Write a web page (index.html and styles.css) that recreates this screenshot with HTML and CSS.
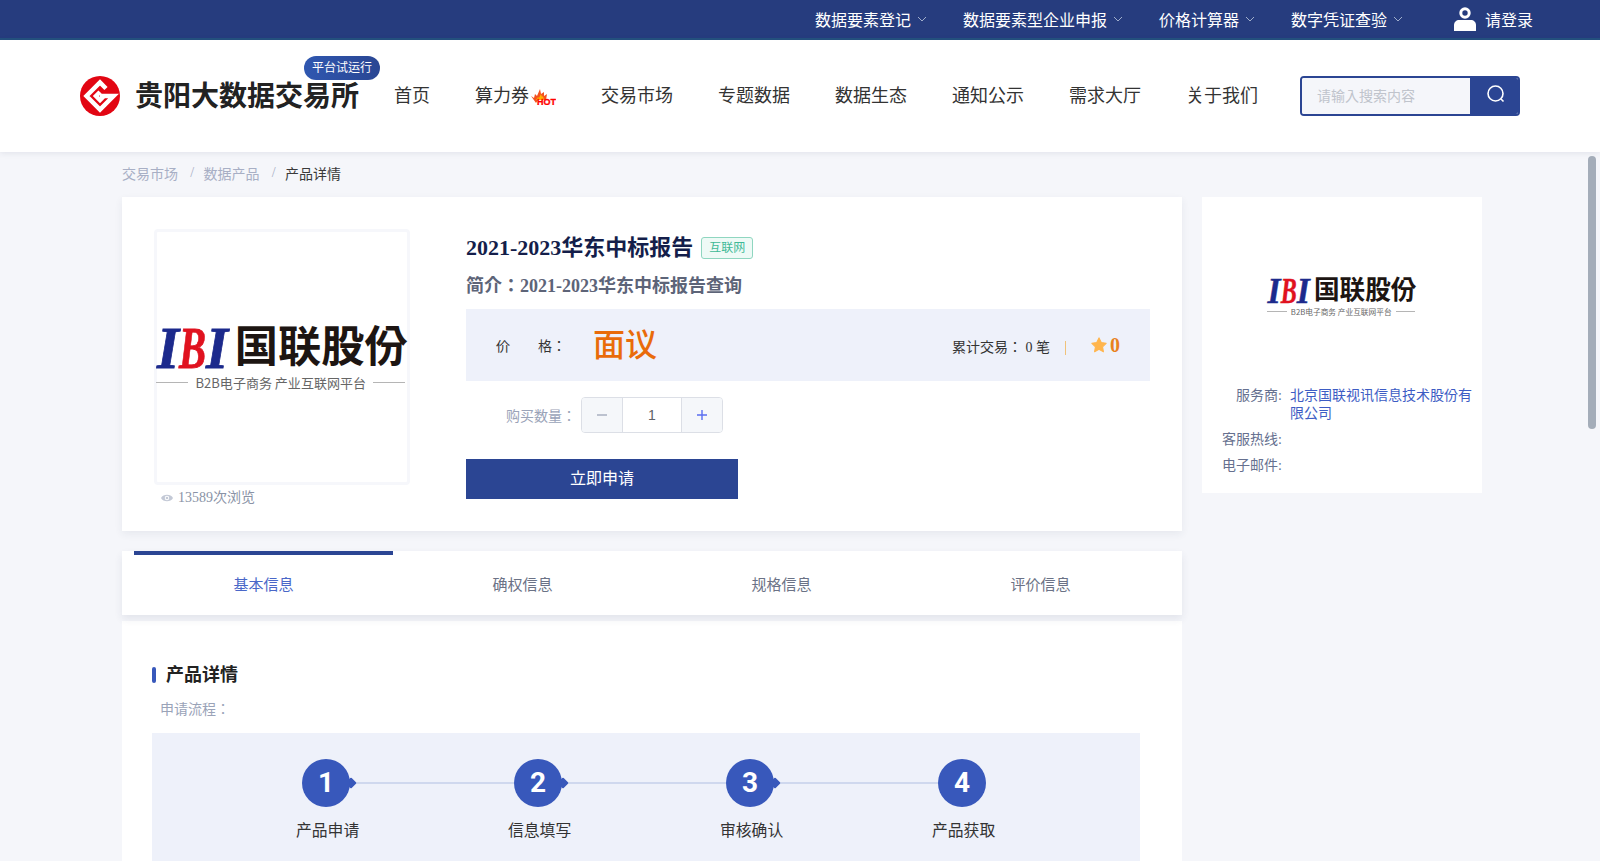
FILE: index.html
```html
<!DOCTYPE html>
<html lang="en">
<head>
    <meta charset="UTF-8">
    <title>贵阳大数据交易所 - 产品详情</title>
    <link rel="stylesheet" href="styles.css">
</head>
<body>
    <div class="top-bar">
        <a class="top-link">数据要素登记<svg class="chevron" viewBox="0 0 10 6"><path d="M1 1l4 4 4-4"/></svg></a>
        <a class="top-link">数据要素型企业申报<svg class="chevron" viewBox="0 0 10 6"><path d="M1 1l4 4 4-4"/></svg></a>
        <a class="top-link">价格计算器<svg class="chevron" viewBox="0 0 10 6"><path d="M1 1l4 4 4-4"/></svg></a>
        <a class="top-link">数字凭证查验<svg class="chevron" viewBox="0 0 10 6"><path d="M1 1l4 4 4-4"/></svg></a>
        <a class="top-login">
            <svg class="user-icon" viewBox="0 0 22 24">
                <circle cx="11" cy="6" r="4.2" fill="none" stroke="#fff" stroke-width="3"/>
                <path d="M0 24v-6c0-3 2.500-5 5-5h12c2.500 0 5 2 5 5v6z" fill="#fff"/>
            </svg>
            请登录
        </a>
    </div>

    <header class="main-header">
        <svg class="site-logo" viewBox="0 0 40 40">
            <circle cx="20" cy="20" r="20" fill="#e20613"/>
            <path d="M26 12.500L20 6.500 6.500 20 20 33.500 33.500 20 20 20l4 0-4 4-4-4 4-4" fill="none" stroke="#fff" stroke-width="4.500"/>
        </svg>
        <div class="site-title">贵阳大数据交易所<span class="trial-badge">平台试运行</span></div>
        <nav class="main-nav">
            <a>首页</a>
            <a class="nav-hot">算力券
                <svg class="hot-icon" viewBox="0 0 26 16">
                    <path d="M1 7l3 2 1-4 2 2 3-7 1 5 3-2 0 4 3-2-1 6H8l-2 3z" fill="#f4511e"/>
                    <path d="M6 11l2-3 1 1 2-4 1 3 1-1 1 4z" fill="#ffb300"/>
                    <text class="hot-text" x="7" y="15.500" textLength="19" lengthAdjust="spacingAndGlyphs">HOT</text>
                </svg>
            </a>
            <a>交易市场</a>
            <a>专题数据</a>
            <a>数据生态</a>
            <a>通知公示</a>
            <a>需求大厅</a>
            <a>关于我们</a>
        </nav>
        <div class="search-box">
            <div class="search-input">请输入搜索内容</div>
            <div class="search-btn">
                <svg class="search-icon" viewBox="0 0 20 20"><circle cx="9.500" cy="9.500" r="7.500"/><path d="M15 15l2.500 2.500"/></svg>
            </div>
        </div>
    </header>

    <div class="breadcrumb">
        <span>交易市场</span><i>/</i><span>数据产品</span><i>/</i><b>产品详情</b>
    </div>

    <div class="page">
        <main class="main-col">
            <section class="card product">
                <div class="product-left">
                    <div class="product-img">
                        <div class="ibi-logo">
                            <div class="ibi-top">
                                <svg class="ibi-mark" viewBox="0 0 73 41">
                                    <text class="ibi-text blue" x="1" y="40.500" textLength="22" lengthAdjust="spacingAndGlyphs">I</text>
                                    <text class="ibi-text red" x="23" y="40.500" textLength="27" lengthAdjust="spacingAndGlyphs">B</text>
                                    <text class="ibi-text blue" x="50" y="40.500" textLength="22" lengthAdjust="spacingAndGlyphs">I</text>
                                </svg>
                                <span class="ibi-name">国联股份</span>
                            </div>
                            <div class="ibi-sub"><i></i><span>B2B电子商务 产业互联网平台</span><i></i></div>
                        </div>
                    </div>
                    <div class="views">
                        <svg class="eye" viewBox="0 0 14 10"><path d="M0 5C2.500 0 11.500 0 14 5 11.500 10 2.500 10 0 5z" fill="#c3c9d6"/><circle cx="7" cy="5" r="2.600" fill="#fff"/><circle cx="7" cy="5" r="1.500" fill="#c3c9d6"/></svg>
                        13589次浏览
                    </div>
                </div>
                <div class="product-info">
                    <h1 class="product-title">2021-2023华东中标报告<span class="tag">互联网</span></h1>
                    <p class="product-desc">简介：2021-2023华东中标报告查询</p>
                    <div class="price-bar">
                        <span class="price-label"><span>价</span><span>格：</span></span>
                        <span class="price-value">面议</span>
                        <span class="trade-count">累计交易： 0 笔</span>
                        <span class="price-divider"></span>
                        <svg class="star" viewBox="0 0 24 24"><path d="M12 2.500l3 6.300 6.500 1-4.800 4.600 1.200 6.600L12 17.700l-5.900 3.300 1.200-6.600-4.800-4.600 6.500-1z"/></svg>
                        <span class="score">0</span>
                    </div>
                    <div class="qty-row">
                        <span class="qty-label">购买数量：</span>
                        <div class="stepper">
                            <span class="step-btn"><svg viewBox="0 0 12 12"><path class="minus" d="M1 6h10"/></svg></span>
                            <span class="step-num">1</span>
                            <span class="step-btn"><svg viewBox="0 0 12 12"><path class="plus" d="M1 6h10M6 1v10"/></svg></span>
                        </div>
                    </div>
                    <div class="apply-btn">立即申请</div>
                </div>
            </section>

            <div class="tabs card">
                <div class="tab active">基本信息</div>
                <div class="tab">确权信息</div>
                <div class="tab">规格信息</div>
                <div class="tab">评价信息</div>
            </div>

            <section class="detail">
                <h2 class="section-title">产品详情</h2>
                <p class="flow-label">申请流程：</p>
                <div class="flow">
                    <div class="flow-step">
                        <span class="flow-num">1</span>
                        <span class="flow-name">产品申请</span>
                    </div>
                    <div class="flow-step">
                        <span class="flow-num">2</span>
                        <span class="flow-name">信息填写</span>
                    </div>
                    <div class="flow-step">
                        <span class="flow-num">3</span>
                        <span class="flow-name">审核确认</span>
                    </div>
                    <div class="flow-step last">
                        <span class="flow-num">4</span>
                        <span class="flow-name">产品获取</span>
                    </div>
                </div>
            </section>
        </main>

        <aside class="side-card">
            <div class="side-logo">
                <div class="ibi-logo small">
                    <div class="ibi-top">
                        <svg class="ibi-mark" viewBox="0 0 73 41">
                            <text class="ibi-text blue" x="1" y="40.500" textLength="22" lengthAdjust="spacingAndGlyphs">I</text>
                            <text class="ibi-text red" x="23" y="40.500" textLength="27" lengthAdjust="spacingAndGlyphs">B</text>
                            <text class="ibi-text blue" x="50" y="40.500" textLength="22" lengthAdjust="spacingAndGlyphs">I</text>
                        </svg>
                        <span class="ibi-name">国联股份</span>
                    </div>
                    <div class="ibi-sub"><i></i><span>B2B电子商务 产业互联网平台</span><i></i></div>
                </div>
            </div>
            <dl class="side-info">
                <dt>服务商:</dt>
                <dd class="link">北京国联视讯信息技术股份有限公司</dd>
                <dt>客服热线:</dt>
                <dd></dd>
                <dt>电子邮件:</dt>
                <dd></dd>
            </dl>
        </aside>
    </div>

    <div class="scroll-thumb"></div>
</body>
</html>
```

FILE: styles.css
```css
* {
    box-sizing: border-box;
}

html, body {
    height: 861px;
    overflow: hidden;
}

body {
    margin: 0;
    position: relative;
    background: #f5f6fa;
    font-family: "Liberation Serif", "Noto Sans CJK JP", serif;
    font-size: 14px;
    color: #333;
}

/* top bar */
.top-bar {
    height: 40px;
    padding-right: 67px;
    display: flex;
    justify-content: flex-end;
    align-items: center;
    background: #263c7e;
    border-bottom: 2px solid #24517f;
    color: #fff;
    font-size: 16px;
}

.top-link {
    display: flex;
    align-items: center;
    margin-right: 36px;
}

.chevron {
    width: 10px;
    height: 6px;
    margin-left: 6px;
    fill: none;
    stroke: #a0aecb;
    stroke-width: 1;
}

.top-login {
    display: flex;
    align-items: center;
    margin-left: 15px;
}

.user-icon {
    width: 22px;
    height: 24px;
    margin-right: 9px;
}

/* main header */
.main-header {
    height: 112px;
    padding-left: 80px;
    display: flex;
    align-items: center;
    background: #fff;
    box-shadow: 0 1px 6px rgba(40, 50, 90, 0.1);
    position: relative;
}

.site-logo {
    width: 40px;
    height: 40px;
    margin-right: 15px;
}

.site-title {
    position: relative;
    width: 225px;
    margin-top: -4px;
    font-size: 28px;
    font-weight: 700;
    color: #222;
    white-space: nowrap;
}

.trial-badge {
    position: absolute;
    left: 169px;
    top: -18px;
    width: 76px;
    height: 24px;
    line-height: 24px;
    text-align: center;
    border-radius: 12px;
    background: linear-gradient(90deg, #2f57b0, #2a4693);
    color: #fff;
    font-size: 12px;
    font-weight: 400;
}

.main-nav {
    display: flex;
    gap: 45px;
    margin: -4px 0 0 34px;
    font-size: 18px;
    color: #333;
}

.main-nav a {
    display: flex;
    align-items: center;
    white-space: nowrap;
}

.hot-icon {
    width: 26px;
    height: 16px;
    margin: 5px 0 0 1px;
}

.hot-text {
    font-family: "Liberation Sans", sans-serif;
    font-size: 9px;
    font-weight: 700;
    fill: #f00;
    stroke: #f00;
    stroke-width: 0.3;
}

.search-box {
    display: flex;
    width: 220px;
    height: 40px;
    margin-left: 42px;
    border: 2px solid #2b4593;
    border-radius: 4px;
    overflow: hidden;
}

.search-input {
    flex: 1;
    padding-left: 15px;
    line-height: 38px;
    background: #f5f6fa;
    color: #c0c4cc;
}

.search-btn {
    width: 48px;
    display: flex;
    justify-content: center;
    padding: 6px 0 0 4px;
    background: #2b4593;
}

.search-icon {
    width: 20px;
    height: 20px;
    fill: none;
    stroke: #fff;
    stroke-width: 1.6;
}

/* breadcrumb */
.breadcrumb {
    height: 42px;
    padding-left: 122px;
    margin-bottom: 3px;
    display: flex;
    align-items: center;
    color: #a8afc5;
}

.breadcrumb i {
    width: 25.5px;
    padding-left: 3px;
    text-align: center;
    font-style: normal;
}

.breadcrumb b {
    font-weight: 400;
    color: #3a3a3a;
}

/* page columns */
.page {
    display: flex;
    align-items: flex-start;
    gap: 20px;
    padding-left: 122px;
}

.main-col {
    width: 1060px;
}

.card {
    background: #fff;
    box-shadow: 0 3px 8px rgba(40, 50, 90, 0.07);
}

/* product block */
.product {
    height: 334px;
    padding: 32px 32px 0;
    display: flex;
}

.product-left {
    width: 256px;
    margin-right: 56px;
}

.product-img {
    width: 256px;
    height: 256px;
    padding-top: 3px;
    border: 3px solid #f6f7fb;
    border-radius: 4px;
    display: flex;
    align-items: center;
    justify-content: center;
}

.ibi-logo {
    flex: none;
    font-size: 42px;
    width: 5.99em;
}

.ibi-logo.small {
    font-size: 24.900px;
}

.ibi-top {
    display: flex;
    align-items: center;
    height: 0.98em;
}

.ibi-mark {
    width: 1.74em;
    height: 0.98em;
    margin-right: 0.13em;
    flex: none;
    overflow: visible;
}

.ibi-text {
    font-family: "Liberation Serif", serif;
    font-style: italic;
    font-weight: 700;
    font-size: 60px;
    stroke-width: 0.8;
}

.ibi-text.blue {
    fill: #1c2a8c;
    stroke: #1c2a8c;
}

.ibi-text.red {
    fill: #e0121f;
    stroke: #e0121f;
}

.ibi-name {
    font-weight: 700;
    font-size: 1.03em;
    line-height: 1;
    color: #1d1512;
    white-space: nowrap;
}

.ibi-sub {
    display: flex;
    align-items: center;
    margin-top: 0.17em;
    padding-right: 0.06em;
    gap: 0.17em;
    font-size: 1em;
}

.ibi-sub i {
    flex: 1;
    height: 0.04em;
    background: #b5b5b5;
}

.ibi-sub span {
    font-family: "Noto Sans CJK SC", sans-serif;
    font-size: 0.31em;
    line-height: 1.2;
    color: #666;
    white-space: nowrap;
}

.views {
    display: flex;
    align-items: center;
    margin-top: 3px;
    padding-left: 7px;
    color: #8a93a6;
    line-height: 20px;
}

.eye {
    width: 12px;
    height: 10px;
    margin-right: 5px;
}

.product-info {
    width: 684px;
}

.product-title {
    display: flex;
    align-items: center;
    margin: 3px 0 0;
    font-size: 22px;
    line-height: 32px;
    font-weight: 700;
    color: #141e4a;
}

.tag {
    margin-left: 8px;
    height: 22px;
    padding: 0 7px;
    line-height: 20px;
    border: 1px solid #8fd6c0;
    border-radius: 3px;
    background: #eefaf6;
    color: #3fb996;
    font-size: 12px;
    font-weight: 400;
}

.product-desc {
    margin: 9px 0 0;
    font-size: 18px;
    line-height: 26px;
    font-weight: 700;
    color: #5d6478;
}

.price-bar {
    height: 72px;
    margin-top: 10px;
    padding: 0 30px;
    display: flex;
    align-items: center;
    background: #eef1fa;
}

.price-label {
    width: 70px;
    display: flex;
    justify-content: space-between;
    margin-right: 27px;
}

.price-value {
    margin: -6px auto 0 0;
    font-size: 32px;
    font-weight: 500;
    color: #e96b0a;
}

.trade-count {
    margin-top: 2px;
    color: #333;
}

.price-divider {
    width: 1px;
    height: 14px;
    margin: 6px 24px 0 15px;
    background: #f0c27a;
}

.star {
    width: 18px;
    height: 18px;
    fill: #ffb54d;
    stroke: #ffb54d;
    stroke-width: 1.5;
    stroke-linejoin: round;
}

.score {
    margin: 0 0 0 2px;
    font-size: 20px;
    font-weight: 700;
    color: #e8821e;
}

.qty-row {
    display: flex;
    align-items: center;
    margin-top: 16px;
    padding-left: 40px;
}

.qty-label {
    width: 75px;
    color: #9aa3b8;
}

.stepper {
    display: flex;
    width: 142px;
    height: 36px;
    border: 1px solid #dcdfe6;
    border-radius: 4px;
    overflow: hidden;
}

.step-btn {
    width: 40px;
    display: flex;
    align-items: center;
    justify-content: center;
    background: #f5f7fa;
}

.step-btn svg {
    width: 12px;
    height: 12px;
    fill: none;
    stroke-width: 1.4;
}

.minus {
    stroke: #a8b0c0;
}

.plus {
    stroke: #5a6ef0;
}

.step-num {
    flex: 1;
    border-left: 1px solid #dcdfe6;
    border-right: 1px solid #dcdfe6;
    text-align: center;
    line-height: 34px;
    font-family: "Liberation Sans", sans-serif;
    color: #606266;
}

.apply-btn {
    width: 272px;
    height: 40px;
    margin-top: 26px;
    line-height: 40px;
    text-align: center;
    background: #2b4593;
    color: #fff;
    font-size: 16px;
}

/* tabs */
.tabs {
    height: 64px;
    margin-top: 20px;
    padding: 0 12px;
    display: flex;
    box-shadow: 0 4px 8px rgba(40, 50, 90, 0.09);
    position: relative;
}

.tab {
    width: 259px;
    padding-top: 20px;
    text-align: center;
    border-top: 4px solid transparent;
    font-size: 15px;
    line-height: 20px;
    color: #6b7286;
}

.tab.active {
    border-top-color: #2b4593;
    color: #4a67c8;
}

/* detail */
.detail {
    height: 240px;
    margin-top: 6px;
    padding: 42px 30px 0;
    background: #fff;
}

.section-title {
    margin: 0;
    padding-left: 14px;
    font-size: 18px;
    line-height: 24px;
    font-weight: 700;
    color: #222;
    position: relative;
}

.section-title::before {
    content: "";
    position: absolute;
    left: 0;
    top: 4px;
    width: 4px;
    height: 16px;
    border-radius: 2px;
    background: #3858bb;
}

.flow-label {
    margin: 13px 0 0 8px;
    line-height: 20px;
    color: #9aa3b8;
}

.flow {
    width: 988px;
    height: 140px;
    margin-top: 13px;
    padding: 26px 0 0 150px;
    display: flex;
    background: #eef1fa;
}

.flow-step {
    flex: none;
    width: 212px;
    display: flex;
    flex-direction: column;
    position: relative;
}

.flow-step::before {
    content: "";
    position: absolute;
    left: 48px;
    right: 0;
    top: 23px;
    height: 2px;
    background: #cfd8ee;
}

.flow-step::after {
    content: "";
    position: absolute;
    left: 45px;
    top: 20px;
    width: 8px;
    height: 8px;
    background: #3858bb;
    transform: rotate(45deg);
    border-radius: 1px;
}

.flow-step.last::before,
.flow-step.last::after {
    display: none;
}

.flow-num {
    width: 48px;
    height: 48px;
    border-radius: 50%;
    background: #3858bb;
    color: #fff;
    text-align: center;
    line-height: 48px;
    font-family: Roboto, sans-serif;
    font-size: 28px;
    font-weight: 700;
    position: relative;
    z-index: 1;
}

.flow-name {
    width: 64px;
    margin: 13px 0 0 -6px;
    font-size: 15.800px;
    line-height: 22px;
    color: #333;
    white-space: nowrap;
}

/* side card */
.side-card {
    width: 280px;
    height: 296px;
    background: #fff;
}

.side-logo {
    height: 190px;
    display: flex;
    align-items: center;
    justify-content: center;
    padding-top: 11px;
}

.side-info {
    margin: 0;
    padding-right: 8px;
    display: grid;
    grid-template-columns: 80px 1fr;
    column-gap: 8px;
    row-gap: 8px;
    line-height: 18px;
    color: #66708f;
}

.side-info dt {
    text-align: right;
}

.side-info dd {
    margin: 0;
}

.side-info .link {
    color: #3d5cc4;
}

/* fake page scrollbar */
.scroll-thumb {
    position: absolute;
    right: 4px;
    top: 156px;
    width: 8px;
    height: 273px;
    border-radius: 4px;
    background: #a4adb9;
}
```
